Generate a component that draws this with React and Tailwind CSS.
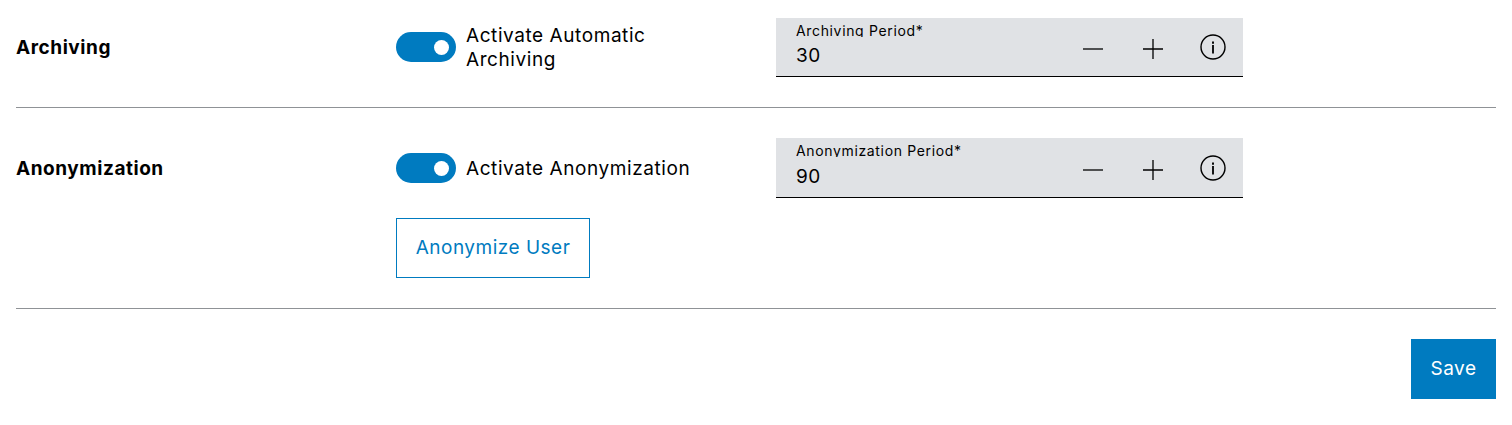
const Toggle = () => (
    <div className="flex h-[30px] w-[60px] shrink-0 items-center justify-end rounded-full bg-[#007bc0] pr-[7px]">
        <div className="h-[15px] w-[15px] rounded-full bg-white" />
    </div>
);

const MinusIcon = () => (
    <svg width="20" height="20" viewBox="0 0 20 20" fill="none" stroke="#000" strokeWidth="1.3">
        <path d="M0 10h20" />
    </svg>
);

const PlusIcon = () => (
    <svg width="20" height="20" viewBox="0 0 20 20" fill="none" stroke="#000" strokeWidth="1.3">
        <path d="M0 10h20M10 0v20" />
    </svg>
);

const InfoIcon = () => (
    <svg width="26" height="26" viewBox="0 0 26 26" fill="none" stroke="#000">
        <circle cx="13" cy="13" r="12" strokeWidth="1.4" />
        <path d="M13 11v8.5" strokeWidth="1.8" />
        <path d="M13 7.6v2.2" strokeWidth="1.9" />
    </svg>
);

const NumberField = ({ label, value, compact }) => (
    <div className={`flex w-[467px] items-center border-b border-black bg-[#e0e2e5] ${compact ? 'h-[59px]' : 'h-[60px]'}`}>
        <div className="min-w-0 flex-1 self-start pl-5 pt-[3px]">
            <div className="h-[16px] overflow-hidden text-[14px] leading-[20px] tracking-[0.65px] text-black">{label}*</div>
            <div className={`text-[19px] leading-[24px] tracking-[0.5px] text-black ${compact ? 'mt-[7px]' : 'mt-[8px]'}`}>{value}</div>
        </div>
        <div className="flex items-center pr-[17px]">
            <div className={`mr-[40px] ${compact ? 'mt-[3px]' : 'mt-[4px]'}`}><MinusIcon /></div>
            <div className={`mr-[37px] ${compact ? 'mt-[3px]' : 'mt-[4px]'}`}><PlusIcon /></div>
            <InfoIcon />
        </div>
    </div>
);

const SettingRow = ({ title, toggleLabel, fieldLabel, fieldValue, compact, children }) => (
    <div className="flex border-b border-[#8f9296] pb-[30px]">
        <div className={`w-[380px] shrink-0 text-[19px] font-bold leading-[24px] tracking-[0.55px] text-black ${compact ? 'pt-[18px]' : 'pt-[19px]'}`}>{title}</div>
        <div className="w-[380px] shrink-0">
            <div className={`flex items-center gap-[10px] ${compact ? 'h-[58px]' : 'h-[60px]'}`}>
                <Toggle />
                <span className="w-[260px] pt-[1px] text-[19px] leading-[23.5px] tracking-[0.57px] text-black">{toggleLabel}</span>
            </div>
            {children}
        </div>
        <NumberField label={fieldLabel} value={fieldValue} compact={compact} />
    </div>
);

const App = () => {
    return (
        <div className='min-h-[425px] bg-white px-4 pt-[18px] font-["Inter",sans-serif]'>
            <SettingRow
                compact
                title="Archiving"
                toggleLabel="Activate Automatic Archiving"
                fieldLabel="Archiving Period"
                fieldValue="30"
            />
            <div className="pt-[30px]">
                <SettingRow
                    title="Anonymization"
                    toggleLabel="Activate Anonymization"
                    fieldLabel="Anonymization Period"
                    fieldValue="90"
                >
                    <button className="mt-[20px] flex h-[60px] w-[194px] items-center justify-center border border-[#007bc0] pt-[1px] text-[19px] tracking-[0.5px] text-[#007bc0]">
                        Anonymize User
                    </button>
                </SettingRow>
            </div>
            <div className="flex justify-end pt-[30px]">
                <button className="h-[60px] w-[85px] bg-[#007bc0] pt-[1px] text-[19px] tracking-[0.5px] text-white">Save</button>
            </div>
        </div>
    );
};

export default App;
